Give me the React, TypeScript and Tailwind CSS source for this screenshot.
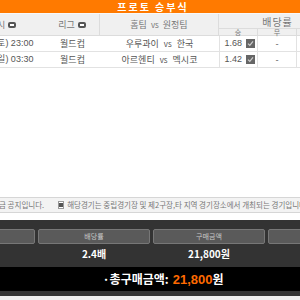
import React from "react";

const font = { fontFamily: '"Noto Sans CJK KR", "Liberation Sans", sans-serif' };

function SortIcon() {
  return (
    <span className="inline-flex items-center justify-center w-[8px] h-[6px] rounded-[2px] bg-[#555] ml-[3px]">
      <span className="block w-[4px] h-[2px] bg-white" />
    </span>
  );
}

function Check() {
  return (
    <span className="inline-flex items-center justify-center w-[9px] h-[9px] bg-[#666] ml-[4px]">
      <svg width="7" height="7" viewBox="0 0 7 7">
        <path d="M1 3.6 L2.8 5.4 L6 1.4" stroke="#cfcfcf" strokeWidth="1.2" fill="none" />
      </svg>
    </span>
  );
}

const rows = [
  { date: "06.14(토) 23:00", league: "월드컵", home: "우루과이", away: "한국", win: "1.68" },
  { date: "06.15(일) 03:30", league: "월드컵", home: "아르헨티", away: "멕시코", win: "1.42" },
];

export default function App() {
  return (
    <div className="w-[300px] h-[300px] overflow-hidden bg-white flex flex-col text-[#555]" style={font}>
      <div className="overflow-hidden">
        <div className="-ml-[40px] w-[376px]">
          <div className="h-[13px] bg-[#ff7a00] flex items-center justify-center pl-[10px] text-white text-[10px] font-bold tracking-[2px] leading-none">
            프로토 승부식
          </div>
          <div className="h-[23px] grid grid-cols-[85px_55px_119px_117px] bg-[#f0f0f0] border-t border-[#f8f8f8] border-b border-b-[#dcdcdc] text-[9px] text-[#777]">
            <div className="flex items-center justify-center">일시<SortIcon /></div>
            <div className="flex items-center justify-center border-r border-[#dcdcdc]">리그<SortIcon /></div>
            <div className="flex items-center justify-center border-r border-[#dcdcdc]">홈팀 <span className="mx-[4px] text-[8px]">vs</span> 원정팀</div>
            <div className="flex flex-col">
              <div className="h-[14px] flex items-center justify-center text-[10px] tracking-[1px]">배당률</div>
              <div className="flex-1 grid grid-cols-3 border-t border-[#dcdcdc] text-[7px] leading-none">
                <div className="flex items-center justify-center border-r border-[#dcdcdc]">승</div>
                <div className="flex items-center justify-center border-r border-[#dcdcdc]">무</div>
                <div className="flex items-center justify-center">패</div>
              </div>
            </div>
          </div>
          {rows.map((r) => (
            <div key={r.date} className="h-[16px] grid grid-cols-[85px_55px_119px_39px_39px_39px] border-b border-[#e2e2e2] text-[9px] text-[#555]">
              <div className="flex items-center justify-center" style={{ fontFamily: '"Liberation Sans", "Noto Sans CJK KR", sans-serif' }}>{r.date}</div>
              <div className="flex items-center justify-center">{r.league}</div>
              <div className="flex items-center justify-center">{r.home}<span className="mx-[5px] text-[8px]">vs</span>{r.away}</div>
              <div className="flex items-center justify-end pr-[2px] border-l border-r border-[#e2e2e2]" style={{ fontFamily: '"Liberation Sans", sans-serif' }}>{r.win}<Check /></div>
              <div className="flex items-center justify-center border-r border-[#e2e2e2]">-</div>
              <div className="flex items-center justify-end pr-[2px]"></div>
            </div>
          ))}
        </div>
      </div>
      <div className="flex-1" />
      <div className="h-[16px] bg-[#f3f3f3] border-t border-b border-[#d6d6d6] flex items-center whitespace-nowrap overflow-hidden text-[7.5px] text-[#777] leading-none">
        <span className="-ml-[1px]">금 공지입니다.</span>
        <span className="ml-[14px] mr-[3px] inline-flex items-center justify-center w-[8px] h-[8px] border border-[#999] bg-white">
          <span className="block w-[4px] h-[4px] bg-[#555]" />
        </span>
        <span>해당경기는 중립경기장 및 제2구장,타 지역 경기장소에서 개최되는 경기입니다.</span>
      </div>
      <div className="h-[7px]" />
      <div className="h-[80px] bg-[#333] flex flex-col">
        <div className="h-[9px]" />
        <div className="overflow-hidden">
          <div className="-ml-[77px] flex gap-[3px] w-[460px]">
            {["선택경기", "배당률", "구매금액", "예상적중금"].map((t) => (
              <div key={t} className="w-[112px] h-[15px] bg-[#5a5a5a] border border-[#777] rounded-[2px] flex items-center justify-center text-[7px] text-[#c8c8c8] leading-none">{t}</div>
            ))}
          </div>
        </div>
        <div className="overflow-hidden">
          <div className="-ml-[77px] flex gap-[3px] w-[460px] h-[19px] items-center text-[10px] font-bold text-white">
            <div className="w-[112px] text-center">2경기</div>
            <div className="w-[112px] text-center">2.4배</div>
            <div className="w-[112px] text-center">21,800원</div>
            <div className="w-[112px] text-center">52,320원</div>
          </div>
        </div>
        <div className="h-[4px]" />
        <div className="h-[24px] bg-black flex items-center justify-center pl-[26px] text-white text-[12px] font-bold leading-none">
          <span>·총구매금액:</span>
          <span className="ml-[4px] text-[#ff6a00] text-[13px]" style={{ fontFamily: '"Liberation Sans", sans-serif' }}>21,800</span>
          <span>원</span>
        </div>
        <div className="h-[5px]" />
        <div className="flex-1 bg-[#eeeeee]" />
      </div>
    </div>
  );
}
